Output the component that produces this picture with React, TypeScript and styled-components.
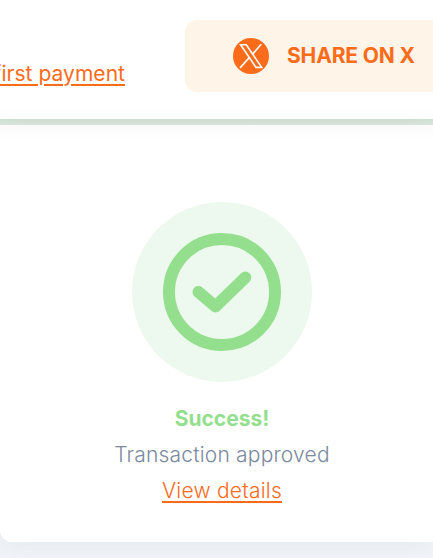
import React from "react";
import styled, { createGlobalStyle } from "styled-components";

const GlobalStyle = createGlobalStyle`
  * { box-sizing: border-box; }
  body {
    margin: 0;
    overflow: hidden;
    background: #f1f4f8;
    font-family: Inter, "Liberation Sans", sans-serif;
  }
`;

const Page = styled.main`
  width: 433px;
  height: 558px;
  overflow: hidden;
`;

const Header = styled.header`
  display: flex;
  align-items: flex-start;
  justify-content: space-between;
  height: 125px;
  padding-top: 20px;
  background: linear-gradient(#fff 119px, #d1dfd3 119px, #dce9de 125px);
`;

const PaymentLink = styled.a`
  display: flex;
  justify-content: flex-end;
  width: 125px;
  margin-top: 38px;
  font-size: 21px;
  line-height: 32px;
  letter-spacing: 0.04px;
  white-space: nowrap;
  color: #fa6b1a;
  text-decoration: underline;
  text-decoration-thickness: 2px;
  text-underline-offset: 3px;
`;

const ShareButton = styled.button`
  display: flex;
  align-items: center;
  gap: 18px;
  width: 248px;
  height: 72px;
  padding: 0 0 0 48px;
  border: 0;
  border-radius: 12px 0 0 12px;
  background: #fff4e8;
  color: #fa6b1a;
  font: 700 21px/32px Inter, "Liberation Sans", sans-serif;
  letter-spacing: -0.15px;
  white-space: nowrap;
`;

const Card = styled.section`
  display: flex;
  flex-direction: column;
  align-items: center;
  height: 417px;
  padding: 77px 0 0 11px;
  border-radius: 0 0 0 12px;
  background: linear-gradient(#fafafa, #fff 14px);
  box-shadow: 0 3px 24px rgba(120, 145, 150, 0.1);
`;

const StatusBadge = styled.div`
  display: flex;
  align-items: center;
  justify-content: center;
  width: 180px;
  height: 180px;
  margin-bottom: 19px;
  border-radius: 50%;
  background: #edf9ee;
`;

const Title = styled.strong`
  font-size: 21px;
  line-height: 36px;
  font-weight: 700;
  color: #94df8e;
`;

const Message = styled.span`
  font-size: 21px;
  line-height: 36px;
  font-weight: 350;
  letter-spacing: 0.19px;
  color: #7b899e;
`;

const DetailsLink = styled.a`
  font-size: 21px;
  line-height: 36px;
  font-weight: 350;
  letter-spacing: 0.23px;
  color: #fa6b1a;
  text-decoration: underline;
  text-decoration-thickness: 2px;
  text-underline-offset: 3px;
`;

const XLogo = () => (
  <svg width="36" height="36" viewBox="0 0 36 36" fill="none">
    <circle cx="18" cy="18" r="18" fill="#fa6b1a" />
    <path
      d="M7.6 6.8H13.3L28.7 29.4H23Z M28.2 6.3L19.6 16.1 M7.1 29.9L16.9 18.9"
      stroke="#fff"
      strokeWidth="1.6"
    />
  </svg>
);

const CheckIcon = () => (
  <svg width="118" height="118" viewBox="0 0 118 118" fill="none" stroke="#94df8e" strokeWidth="12">
    <circle cx="59" cy="59" r="53" />
    <path d="M35.5 59L52.5 73.5L82.3 44.5" strokeLinecap="round" strokeLinejoin="round" />
  </svg>
);

export default function App() {
  return (
    <Page>
      <GlobalStyle />
      <Header>
        <PaymentLink>first payment</PaymentLink>
        <ShareButton>
          <XLogo />
          SHARE ON X
        </ShareButton>
      </Header>
      <Card>
        <StatusBadge>
          <CheckIcon />
        </StatusBadge>
        <Title>Success!</Title>
        <Message>Transaction approved</Message>
        <DetailsLink>View details</DetailsLink>
      </Card>
    </Page>
  );
}
